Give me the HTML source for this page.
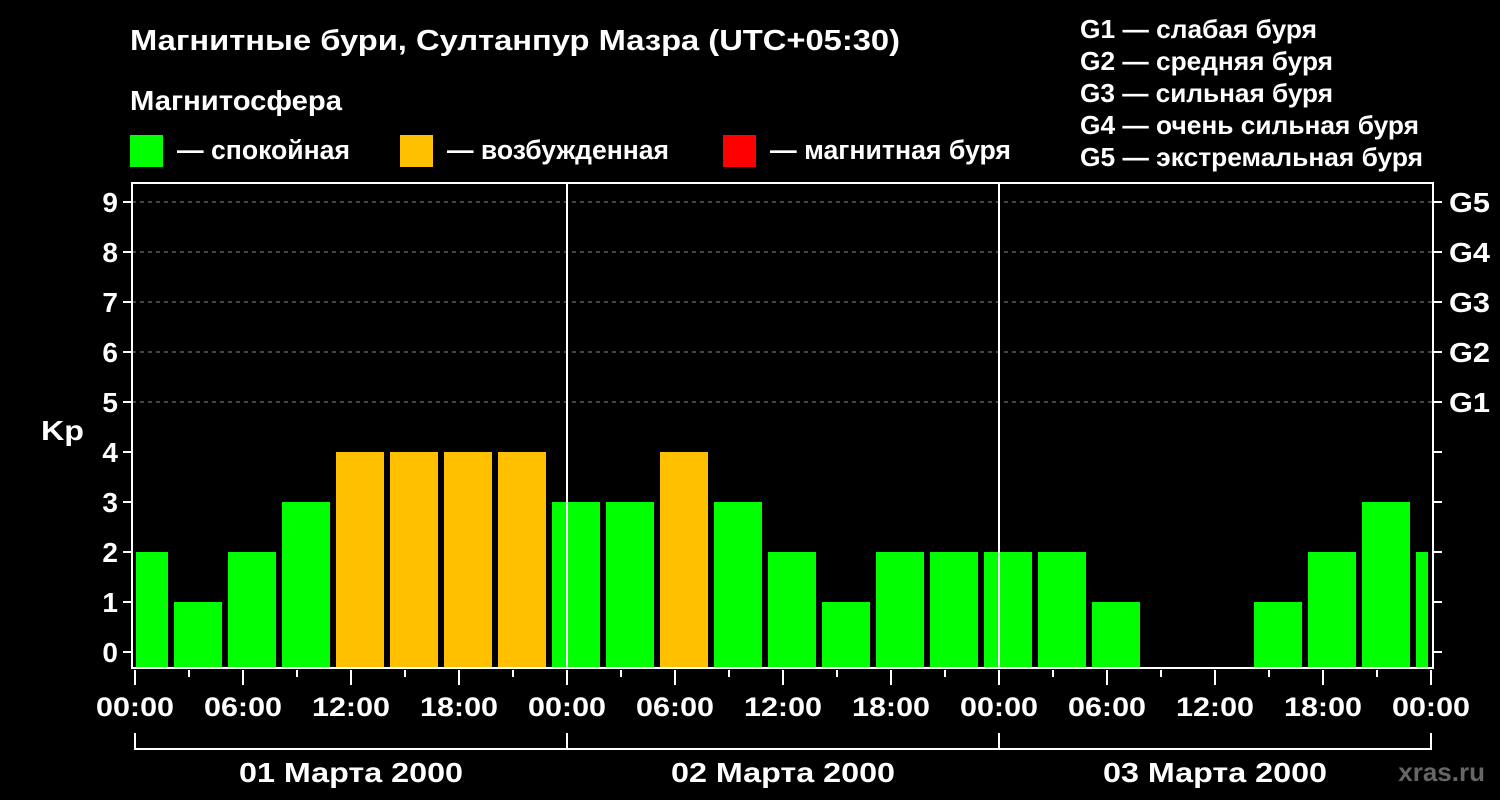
<!DOCTYPE html>
<html><head><meta charset="utf-8"><style>
html,body{margin:0;padding:0;background:#000;width:1500px;height:800px;overflow:hidden}
svg text{font-family:"Liberation Sans",sans-serif;font-weight:bold;fill:#fff}
</style></head><body>
<svg width="1500" height="800" viewBox="0 0 1500 800" xmlns="http://www.w3.org/2000/svg">
<rect width="1500" height="800" fill="#000"/>
<text x="130" y="50" font-size="29" textLength="770" lengthAdjust="spacingAndGlyphs">Магнитные бури, Султанпур Мазра (UTC+05:30)</text>
<text x="130" y="110" font-size="28" textLength="212" lengthAdjust="spacingAndGlyphs">Магнитосфера</text>
<rect x="130" y="135" width="33" height="32" fill="#00ff00"/>
<text x="177" y="159" font-size="27" textLength="173" lengthAdjust="spacingAndGlyphs">— спокойная</text>
<rect x="400" y="135" width="33" height="32" fill="#ffc000"/>
<text x="447" y="159" font-size="27" textLength="222" lengthAdjust="spacingAndGlyphs">— возбужденная</text>
<rect x="723" y="135" width="33" height="32" fill="#ff0000"/>
<text x="770" y="159" font-size="27" textLength="241" lengthAdjust="spacingAndGlyphs">— магнитная буря</text>
<g font-size="26">
<text x="1080" y="38" textLength="237" lengthAdjust="spacingAndGlyphs">G1 — слабая буря</text>
<text x="1080" y="70" textLength="253" lengthAdjust="spacingAndGlyphs">G2 — средняя буря</text>
<text x="1080" y="102" textLength="253" lengthAdjust="spacingAndGlyphs">G3 — сильная буря</text>
<text x="1080" y="134" textLength="339" lengthAdjust="spacingAndGlyphs">G4 — очень сильная буря</text>
<text x="1080" y="166" textLength="343" lengthAdjust="spacingAndGlyphs">G5 — экстремальная буря</text>
</g>
<g stroke="#888" stroke-width="1" stroke-dasharray="4,4">
<line x1="132" y1="202" x2="1433" y2="202"/><line x1="132" y1="252" x2="1433" y2="252"/><line x1="132" y1="302" x2="1433" y2="302"/><line x1="132" y1="352" x2="1433" y2="352"/><line x1="132" y1="402" x2="1433" y2="402"/>
</g>
<g fill="#00ff00">
<rect x="136" y="552" width="32" height="115"/>
<rect x="174" y="602" width="48" height="65"/>
<rect x="228" y="552" width="48" height="115"/>
<rect x="282" y="502" width="48" height="165"/>
<rect x="552" y="502" width="48" height="165"/>
<rect x="606" y="502" width="48" height="165"/>
<rect x="714" y="502" width="48" height="165"/>
<rect x="768" y="552" width="48" height="115"/>
<rect x="822" y="602" width="48" height="65"/>
<rect x="876" y="552" width="48" height="115"/>
<rect x="930" y="552" width="48" height="115"/>
<rect x="984" y="552" width="48" height="115"/>
<rect x="1038" y="552" width="48" height="115"/>
<rect x="1092" y="602" width="48" height="65"/>
<rect x="1254" y="602" width="48" height="65"/>
<rect x="1308" y="552" width="48" height="115"/>
<rect x="1362" y="502" width="48" height="165"/>
<rect x="1416" y="552" width="12" height="115"/>
</g>
<g fill="#ffc000">
<rect x="336" y="452" width="48" height="215"/>
<rect x="390" y="452" width="48" height="215"/>
<rect x="444" y="452" width="48" height="215"/>
<rect x="498" y="452" width="48" height="215"/>
<rect x="660" y="452" width="48" height="215"/>
</g>
<g stroke="#fff" stroke-width="2" fill="none">
<rect x="132" y="183" width="1301" height="485"/>
<line x1="567" y1="183" x2="567" y2="668"/>
<line x1="999" y1="183" x2="999" y2="668"/>
<path d="M123 202h9M123 252h9M123 302h9M123 352h9M123 402h9M123 452h9M123 502h9M123 552h9M123 602h9M123 652h9"/>
<path d="M1433 202h9M1433 252h9M1433 302h9M1433 352h9M1433 402h9M1433 452h9M1433 502h9M1433 552h9M1433 602h9M1433 652h9"/>
<path d="M135 670v15M243 670v15M351 670v15M459 670v15M567 670v15M675 670v15M783 670v15M891 670v15M999 670v15M1107 670v15M1215 670v15M1323 670v15M1431 670v15"/>
<path d="M189 670v7M297 670v7M405 670v7M513 670v7M621 670v7M729 670v7M837 670v7M945 670v7M1053 670v7M1161 670v7M1269 670v7M1377 670v7"/>
<path d="M135 733v16H1431V733M567 733v16M999 733v16"/>
</g>
<g font-size="28" text-anchor="end">
<text x="118" y="212">9</text><text x="118" y="262">8</text><text x="118" y="312">7</text><text x="118" y="362">6</text><text x="118" y="412">5</text><text x="118" y="462">4</text><text x="118" y="512">3</text><text x="118" y="562">2</text><text x="118" y="612">1</text><text x="118" y="662">0</text>
</g>
<text x="41" y="440" font-size="28" textLength="43" lengthAdjust="spacingAndGlyphs">Kp</text>
<g font-size="28">
<text x="1449" y="212" textLength="41" lengthAdjust="spacingAndGlyphs">G5</text><text x="1449" y="262" textLength="41" lengthAdjust="spacingAndGlyphs">G4</text><text x="1449" y="312" textLength="41" lengthAdjust="spacingAndGlyphs">G3</text><text x="1449" y="362" textLength="41" lengthAdjust="spacingAndGlyphs">G2</text><text x="1449" y="412" textLength="41" lengthAdjust="spacingAndGlyphs">G1</text>
</g>
<g font-size="27" text-anchor="middle">
<text x="135" y="716" textLength="78" lengthAdjust="spacingAndGlyphs">00:00</text><text x="243" y="716" textLength="78" lengthAdjust="spacingAndGlyphs">06:00</text><text x="351" y="716" textLength="78" lengthAdjust="spacingAndGlyphs">12:00</text><text x="459" y="716" textLength="78" lengthAdjust="spacingAndGlyphs">18:00</text>
<text x="567" y="716" textLength="78" lengthAdjust="spacingAndGlyphs">00:00</text><text x="675" y="716" textLength="78" lengthAdjust="spacingAndGlyphs">06:00</text><text x="783" y="716" textLength="78" lengthAdjust="spacingAndGlyphs">12:00</text><text x="891" y="716" textLength="78" lengthAdjust="spacingAndGlyphs">18:00</text>
<text x="999" y="716" textLength="78" lengthAdjust="spacingAndGlyphs">00:00</text><text x="1107" y="716" textLength="78" lengthAdjust="spacingAndGlyphs">06:00</text><text x="1215" y="716" textLength="78" lengthAdjust="spacingAndGlyphs">12:00</text><text x="1323" y="716" textLength="78" lengthAdjust="spacingAndGlyphs">18:00</text>
<text x="1431" y="716" textLength="78" lengthAdjust="spacingAndGlyphs">00:00</text>
<text x="351" y="782" font-size="28" textLength="224" lengthAdjust="spacingAndGlyphs">01 Марта 2000</text>
<text x="783" y="782" font-size="28" textLength="224" lengthAdjust="spacingAndGlyphs">02 Марта 2000</text>
<text x="1215" y="782" font-size="28" textLength="224" lengthAdjust="spacingAndGlyphs">03 Марта 2000</text>
</g>
<text x="1485" y="781" font-size="26" text-anchor="end" style="fill:#666">xras.ru</text>
</svg>
</body></html>
